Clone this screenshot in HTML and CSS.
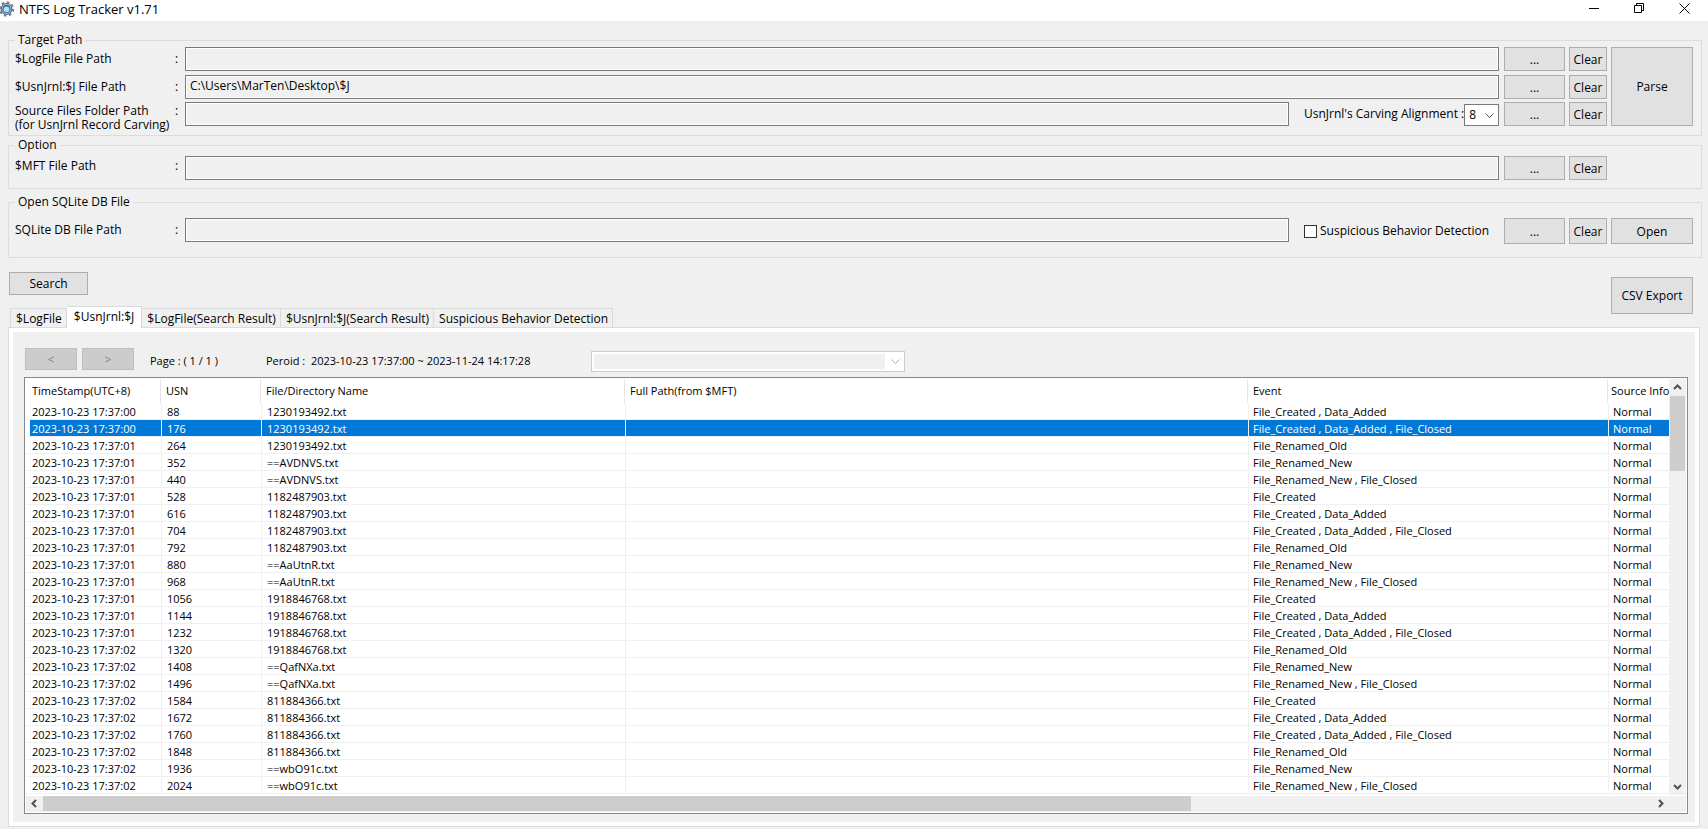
FILE: index.html
```html
<!DOCTYPE html>
<html lang="en">
<head>
<meta charset="utf-8">
<title>NTFS Log Tracker v1.71</title>
<link rel="stylesheet" href="styles.css">
</head>
<body>
<header class="titlebar">
  <svg class="app-icon" viewBox="0 0 16 16" aria-hidden="true">
    <circle cx="6.500" cy="8" r="6.600" fill="none" stroke="#7d858c" stroke-width="2.200" stroke-dasharray="2.600 2.580"/>
    <circle cx="6.500" cy="8" r="5.400" fill="#e8eef3" stroke="#5d6872" stroke-width="1.200"/>
    <circle cx="6.500" cy="8" r="4.300" fill="#1f6fb8"/>
    <circle cx="6.500" cy="8.300" r="2.900" fill="#b4dbf7"/>
  </svg>
  <h1 class="title">NTFS Log Tracker v1.71</h1>
  <div class="window-buttons">
    <button class="win" aria-label="Minimize"><svg viewBox="0 0 11 11"><path d="M0 5.5h10"/></svg></button>
    <button class="win" aria-label="Restore"><svg viewBox="0 0 11 11"><path d="M.5 2.5h7v7h-7zM2.500 2.500v-2h7v7h-2"/></svg></button>
    <button class="win" aria-label="Close"><svg viewBox="0 0 11 11"><path d="M.5.5l10 10M10.500.5l-10 10"/></svg></button>
  </div>
</header>

<main class="content">
  <fieldset class="group target">
    <legend>Target Path</legend>
    <div class="grid">
      <label class="name" for="logfile"><span>$LogFile File Path</span><span>:</span></label>
      <div class="field"><input class="path" id="logfile" type="text" readonly></div>
      <button class="btn">...</button>
      <button class="btn">Clear</button>
      <button class="btn parse">Parse</button>
      <label class="name" for="usn"><span>$UsnJrnl:$J File Path</span><span>:</span></label>
      <div class="field"><input class="path" id="usn" type="text" value="C:\Users\MarTen\Desktop\$J" readonly></div>
      <button class="btn">...</button>
      <button class="btn">Clear</button>
      <label class="name two-line" for="source"><span>Source Files Folder Path<br>(for UsnJrnl Record Carving)</span><span>:</span></label>
      <div class="field">
        <input class="path" id="source" type="text" readonly>
        <div class="extra">
          <label for="align">UsnJrnl's Carving Alignment :</label>
          <span class="select-wrap small">
            <select id="align"><option>8</option></select>
            <svg class="chevron" viewBox="0 0 9 6"><path d="M.5.5l4 4 4-4"/></svg>
          </span>
        </div>
      </div>
      <button class="btn">...</button>
      <button class="btn">Clear</button>
    </div>
  </fieldset>

  <fieldset class="group option">
    <legend>Option</legend>
    <div class="grid">
      <label class="name" for="mft"><span>$MFT File Path</span><span>:</span></label>
      <div class="field"><input class="path" id="mft" type="text" readonly></div>
      <button class="btn">...</button>
      <button class="btn">Clear</button>
    </div>
  </fieldset>

  <fieldset class="group database">
    <legend>Open SQLite DB File</legend>
    <div class="grid">
      <label class="name" for="db"><span>SQLite DB File Path</span><span>:</span></label>
      <div class="field">
        <input class="path" id="db" type="text" readonly>
        <div class="extra">
          <label class="check"><input type="checkbox">Suspicious Behavior Detection</label>
        </div>
      </div>
      <button class="btn">...</button>
      <button class="btn">Clear</button>
      <button class="btn">Open</button>
    </div>
  </fieldset>

  <div class="actions">
    <div class="left">
      <button class="btn search">Search</button>
      <div class="tabs" role="tablist">
        <button class="tab" role="tab">$LogFile</button>
        <button class="tab active" role="tab" aria-selected="true">$UsnJrnl:$J</button>
        <button class="tab" role="tab">$LogFile(Search Result)</button>
        <button class="tab" role="tab">$UsnJrnl:$J(Search Result)</button>
        <button class="tab" role="tab">Suspicious Behavior Detection</button>
      </div>
    </div>
    <button class="btn export">CSV Export</button>
  </div>

  <section class="panel">
    <div class="pager">
      <button class="btn nav" disabled>&lt;</button>
      <button class="btn nav" disabled>&gt;</button>
      <span class="page">Page : ( 1 / 1 )</span>
      <span class="period">Peroid :&nbsp; 2023-10-23 17:37:00 ~ 2023-11-24 14:17:28</span>
      <span class="select-wrap wide">
        <select aria-label="Period" disabled></select>
        <svg class="chevron" viewBox="0 0 9 6"><path d="M.5.5l4 4 4-4"/></svg>
      </span>
    </div>

    <div class="list">
      <div class="viewport">
        <table class="records">
          <colgroup><col class="c-time"><col class="c-usn"><col class="c-file"><col><col class="c-event"><col class="c-info"></colgroup>
          <thead><tr><th>TimeStamp(UTC+8)</th><th>USN</th><th>File/Directory Name</th><th>Full Path(from $MFT)</th><th>Event</th><th>Source Info</th></tr></thead>
          <tbody>
            <tr><td>2023-10-23 17:37:00</td><td>88</td><td>1230193492.txt</td><td></td><td>File_Created , Data_Added</td><td>Normal</td></tr>
            <tr class="selected"><td>2023-10-23 17:37:00</td><td>176</td><td>1230193492.txt</td><td></td><td>File_Created , Data_Added , File_Closed</td><td>Normal</td></tr>
            <tr><td>2023-10-23 17:37:01</td><td>264</td><td>1230193492.txt</td><td></td><td>File_Renamed_Old</td><td>Normal</td></tr>
            <tr><td>2023-10-23 17:37:01</td><td>352</td><td>==AVDNVS.txt</td><td></td><td>File_Renamed_New</td><td>Normal</td></tr>
            <tr><td>2023-10-23 17:37:01</td><td>440</td><td>==AVDNVS.txt</td><td></td><td>File_Renamed_New , File_Closed</td><td>Normal</td></tr>
            <tr><td>2023-10-23 17:37:01</td><td>528</td><td>1182487903.txt</td><td></td><td>File_Created</td><td>Normal</td></tr>
            <tr><td>2023-10-23 17:37:01</td><td>616</td><td>1182487903.txt</td><td></td><td>File_Created , Data_Added</td><td>Normal</td></tr>
            <tr><td>2023-10-23 17:37:01</td><td>704</td><td>1182487903.txt</td><td></td><td>File_Created , Data_Added , File_Closed</td><td>Normal</td></tr>
            <tr><td>2023-10-23 17:37:01</td><td>792</td><td>1182487903.txt</td><td></td><td>File_Renamed_Old</td><td>Normal</td></tr>
            <tr><td>2023-10-23 17:37:01</td><td>880</td><td>==AaUtnR.txt</td><td></td><td>File_Renamed_New</td><td>Normal</td></tr>
            <tr><td>2023-10-23 17:37:01</td><td>968</td><td>==AaUtnR.txt</td><td></td><td>File_Renamed_New , File_Closed</td><td>Normal</td></tr>
            <tr><td>2023-10-23 17:37:01</td><td>1056</td><td>1918846768.txt</td><td></td><td>File_Created</td><td>Normal</td></tr>
            <tr><td>2023-10-23 17:37:01</td><td>1144</td><td>1918846768.txt</td><td></td><td>File_Created , Data_Added</td><td>Normal</td></tr>
            <tr><td>2023-10-23 17:37:01</td><td>1232</td><td>1918846768.txt</td><td></td><td>File_Created , Data_Added , File_Closed</td><td>Normal</td></tr>
            <tr><td>2023-10-23 17:37:02</td><td>1320</td><td>1918846768.txt</td><td></td><td>File_Renamed_Old</td><td>Normal</td></tr>
            <tr><td>2023-10-23 17:37:02</td><td>1408</td><td>==QafNXa.txt</td><td></td><td>File_Renamed_New</td><td>Normal</td></tr>
            <tr><td>2023-10-23 17:37:02</td><td>1496</td><td>==QafNXa.txt</td><td></td><td>File_Renamed_New , File_Closed</td><td>Normal</td></tr>
            <tr><td>2023-10-23 17:37:02</td><td>1584</td><td>811884366.txt</td><td></td><td>File_Created</td><td>Normal</td></tr>
            <tr><td>2023-10-23 17:37:02</td><td>1672</td><td>811884366.txt</td><td></td><td>File_Created , Data_Added</td><td>Normal</td></tr>
            <tr><td>2023-10-23 17:37:02</td><td>1760</td><td>811884366.txt</td><td></td><td>File_Created , Data_Added , File_Closed</td><td>Normal</td></tr>
            <tr><td>2023-10-23 17:37:02</td><td>1848</td><td>811884366.txt</td><td></td><td>File_Renamed_Old</td><td>Normal</td></tr>
            <tr><td>2023-10-23 17:37:02</td><td>1936</td><td>==wbO91c.txt</td><td></td><td>File_Renamed_New</td><td>Normal</td></tr>
            <tr><td>2023-10-23 17:37:02</td><td>2024</td><td>==wbO91c.txt</td><td></td><td>File_Renamed_New , File_Closed</td><td>Normal</td></tr>
          </tbody>
        </table>
      </div>
      <div class="vbar">
        <svg class="arrow" viewBox="0 0 9 6"><path d="M1 5l3.500-3.500L8 5"/></svg>
        <div class="track"><div class="thumb"></div></div>
        <svg class="arrow" viewBox="0 0 9 6"><path d="M1 1l3.500 3.500L8 1"/></svg>
      </div>
      <div class="hbar">
        <svg class="arrow" viewBox="0 0 6 9"><path d="M5 1L1.500 4.500 5 8"/></svg>
        <div class="track"><div class="thumb"></div></div>
        <svg class="arrow" viewBox="0 0 6 9"><path d="M1 1l3.500 3.500L1 8"/></svg>
      </div>
    </div>
  </section>
</main>
</body>
</html>
```
FILE: styles.css
```css
* { box-sizing: border-box; }

body {
  margin: 0;
  background: #f0f0f0;
  color: #000;
  font: 12px/14px "Open Sans", "Noto Sans", sans-serif;
}

button, input, select { font: inherit; color: inherit; margin: 0; }

/* Title bar */
.titlebar {
  display: flex;
  align-items: flex-start;
  height: 21px;
  background: #fff;
}
.app-icon { width: 16px; height: 16px; margin: 1px 3px 0 0; }
.title { margin: 0; font-size: 13px; font-weight: 400; line-height: 18px; }
.window-buttons { display: flex; margin: 0 1px 0 auto; }
.win {
  width: 45px;
  height: 16px;
  padding: 0;
  border: 0;
  background: none;
}
.win svg { display: block; width: 11px; height: 11px; margin: 0 auto; fill: none; stroke: #000; }

/* Groups of path fields */
.content { padding: 12px 6px 0 8px; }
.group {
  min-width: 0;
  margin: 0;
  padding: 0 8px 0 6px;
  border: 1px solid #dcdcdc;
}
.group legend { padding: 0 3px; line-height: 14px; }
.target { padding-bottom: 9px; }
.option { margin-top: 2px; padding-top: 4px; padding-bottom: 8px; }
.database { margin-top: 6px; padding-top: 9px; padding-bottom: 13px; }

.grid {
  display: grid;
  grid-template-columns: 166px 1fr 61px 38px 82px;
  column-gap: 4px;
  grid-auto-rows: 24px;
}
.target .grid { grid-template-rows: 28px 27px 24px; }
.target .btn { height: 24px; }
.database .grid { grid-auto-rows: 26px; }
.name {
  display: flex;
  justify-content: space-between;
  height: 24px;
  padding-right: 2px;
  line-height: 24px;
  white-space: nowrap;
}
.option .name { line-height: 20px; }
.two-line { line-height: 14px; padding-top: 2px; }
.name span:last-child { width: 4px; }
.field { display: flex; align-items: flex-start; min-width: 0; padding-right: 1px; }
.path {
  flex: 1;
  min-width: 0;
  height: 24px;
  padding: 0 4px 3px;
  border: 1px solid #7a7a7a;
  background: #f0f0f0;
  box-shadow: inset 0 0 0 1px #fff;
}
.extra {
  display: flex;
  align-items: center;
  justify-content: space-between;
  width: 210px;
  height: 24px;
  padding-left: 15px;
  white-space: nowrap;
}
.database .extra { height: 26px; }
.check { display: flex; align-items: center; gap: 3px; }
.check input {
  appearance: none;
  width: 13px;
  height: 13px;
  border: 1px solid #333;
  background: #fff;
}

.btn {
  padding: 1px 0 0;
  border: 1px solid #adadad;
  background: #e1e1e1;
}
.target .parse { grid-area: 1 / 5 / 4 / 6; height: auto; }

.select-wrap { position: relative; display: block; flex: none; }
.select-wrap select {
  display: block;
  width: 100%;
  height: 22px;
  padding: 0 4px;
  appearance: none;
  border: 1px solid #7a7a7a;
  border-radius: 0;
  background: #fff;
}
.small { width: 35px; align-self: flex-end; }
.chevron {
  position: absolute;
  top: 9px;
  right: 5px;
  width: 9px;
  height: 6px;
  fill: none;
  stroke: #555;
}

/* Search, tabs and export */
.actions {
  display: flex;
  justify-content: space-between;
  align-items: flex-start;
  padding: 14px 9px 0 1px;
}
.search { display: block; width: 79px; height: 23px; }
.tabs { display: flex; align-items: flex-end; margin-top: 11px; padding-left: 1px; }
.tab {
  height: 19px;
  padding: 1px 4px 0 5px;
  border: 1px solid #d9d9d9;
  border-width: 1px 1px 0 0;
  background: #f0f0f0;
  white-space: nowrap;
}
.tab:first-child { border-left-width: 1px; }
.tab.active {
  height: 22px;
  margin-bottom: -1px;
  padding: 0 7px 2px;
  background: #fff;
  z-index: 1;
}
.export { width: 82px; height: 37px; margin-top: 5px; }

/* Tab page */
.panel {
  margin-right: 2px;
  padding: 17px 8px 12px 12px;
  border: 1px solid #dcdcdc;
  background: #f0f0f0;
  box-shadow: inset 0 0 0 4px #fff;
  font-size: 11px;
}
.pager {
  display: flex;
  align-items: flex-start;
  padding: 3px 0 0 4px;
  height: 32px;
}
.nav { width: 52px; height: 22px; margin-right: 5px; font-size: 12px; }
.nav:disabled { border-color: #bfbfbf; background: #ccc; color: #838383; }
.page { width: 116px; margin-left: 11px; line-height: 26px; }
.period { width: 325px; line-height: 26px; white-space: nowrap; }
.wide { width: 314px; margin-top: 3px; }
.wide select:disabled {
  height: 21px;
  border-color: #ccc;
  opacity: 1;
  background: linear-gradient(#f0f0f0, #f0f0f0) 2px 2px / calc(100% - 21px) 15px no-repeat #fff;
}
.wide .chevron { stroke: #aaa; top: 8px; }

/* Record list */
.list {
  display: grid;
  grid-template-columns: 1fr 17px;
  grid-template-rows: auto 17px;
  margin: 0 3px;
  padding: 1px;
  border: 1px solid #828790;
  background: #fff;
}
.viewport { overflow: hidden; min-width: 0; padding-bottom: 1px; }
.records {
  width: 100%;
  table-layout: fixed;
  border-collapse: separate;
  border-spacing: 0;
  white-space: nowrap;
}
.c-time { width: 136px; }
.c-usn { width: 100px; }
.c-file { width: 364px; }
.c-event { width: 360px; }
.c-info { width: 60px; }
.records th {
  height: 24px;
  padding: 0 0 0 4px;
  background: linear-gradient(#e5e5e5, #e5e5e5) right 1px top / 1px 100% no-repeat;
  font-weight: 400;
  text-align: left;
}
.records td {
  height: 17px;
  padding: 2px 0 0 4px;
  border-right: 1px solid #f0f0f0;
  border-bottom: 1px solid #f0f0f0;
  line-height: 14px;
}
.records td:nth-child(2), .records td:nth-child(3) { padding-left: 5px; }
.records th:first-child, .records td:first-child { padding-left: 6px; }
.records th:last-child { padding-left: 2px; background: none; }
.records td:last-child { border-right: 0; }
.selected td { background: #0078d7; color: #fff; }
.selected td:first-child { background: linear-gradient(to right, #fff 4px, #0078d7 4px); }

.vbar, .hbar { display: flex; align-items: center; background: #f0f0f0; }
.vbar { flex-direction: column; padding: 5px 1px 5px 0; }
.hbar { grid-column: 1 / -1; padding: 0 22px 1px 5px; border-top: 1px solid #fff; }
.arrow { flex: none; width: 9px; height: 6px; fill: none; stroke: #505050; stroke-width: 2; }
.hbar .arrow { width: 6px; height: 9px; }
.track { flex: 1; }
.thumb { background: #cdcdcd; }
.vbar .track { width: 15px; margin: 6px 0; }
.vbar .thumb { height: 75px; }
.hbar .track { margin: 0 5px 0 6px; }
.hbar .thumb { width: 71.3%; height: 15px; }
```
